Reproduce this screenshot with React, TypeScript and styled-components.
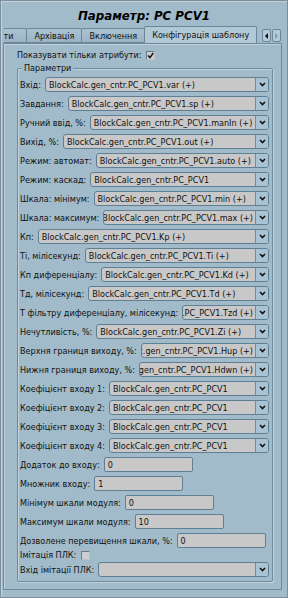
import React from 'react';
import styled, { createGlobalStyle } from 'styled-components';

const GlobalStyle = createGlobalStyle`
  html, body {
    margin: 0;
    padding: 0;
    background: #a1bbca;
  }
  body {
    font-family: "DejaVu Sans", "Liberation Sans", sans-serif;
  }
`;

type Row =
  | { kind: 'combo'; label: string; value: string }
  | { kind: 'edit'; label: string; value: string }
  | { kind: 'check'; label: string; checked: boolean };

const rows: Row[] = [
  { kind: 'combo', label: 'Вхід:', value: 'BlockCalc.gen_cntr.PC_PCV1.var (+)' },
  { kind: 'combo', label: 'Завдання:', value: 'BlockCalc.gen_cntr.PC_PCV1.sp (+)' },
  { kind: 'combo', label: 'Ручний ввід, %:', value: 'BlockCalc.gen_cntr.PC_PCV1.manIn (+)' },
  { kind: 'combo', label: 'Вихід, %:', value: 'BlockCalc.gen_cntr.PC_PCV1.out (+)' },
  { kind: 'combo', label: 'Режим: автомат:', value: 'BlockCalc.gen_cntr.PC_PCV1.auto (+)' },
  { kind: 'combo', label: 'Режим: каскад:', value: 'BlockCalc.gen_cntr.PC_PCV1' },
  { kind: 'combo', label: 'Шкала: мінімум:', value: 'BlockCalc.gen_cntr.PC_PCV1.min (+)' },
  { kind: 'combo', label: 'Шкала: максимум:', value: 'BlockCalc.gen_cntr.PC_PCV1.max (+)' },
  { kind: 'combo', label: 'Кп:', value: 'BlockCalc.gen_cntr.PC_PCV1.Kp (+)' },
  { kind: 'combo', label: 'Ті, мілісекунд:', value: 'BlockCalc.gen_cntr.PC_PCV1.Ti (+)' },
  { kind: 'combo', label: 'Кп диференціалу:', value: 'BlockCalc.gen_cntr.PC_PCV1.Kd (+)' },
  { kind: 'combo', label: 'Тд, мілісекунд:', value: 'BlockCalc.gen_cntr.PC_PCV1.Td (+)' },
  { kind: 'combo', label: 'Т фільтру диференціалу, мілісекунд:', value: 'BlockCalc.gen_cntr.PC_PCV1.Tzd (+)' },
  { kind: 'combo', label: 'Нечутливість, %:', value: 'BlockCalc.gen_cntr.PC_PCV1.Zi (+)' },
  { kind: 'combo', label: 'Верхня границя виходу, %:', value: 'BlockCalc.gen_cntr.PC_PCV1.Hup (+)' },
  { kind: 'combo', label: 'Нижня границя виходу, %:', value: 'BlockCalc.gen_cntr.PC_PCV1.Hdwn (+)' },
  { kind: 'combo', label: 'Коефіцієнт входу 1:', value: 'BlockCalc.gen_cntr.PC_PCV1' },
  { kind: 'combo', label: 'Коефіцієнт входу 2:', value: 'BlockCalc.gen_cntr.PC_PCV1' },
  { kind: 'combo', label: 'Коефіцієнт входу 3:', value: 'BlockCalc.gen_cntr.PC_PCV1' },
  { kind: 'combo', label: 'Коефіцієнт входу 4:', value: 'BlockCalc.gen_cntr.PC_PCV1' },
  { kind: 'edit', label: 'Додаток до входу:', value: '0' },
  { kind: 'edit', label: 'Множник входу:', value: '1' },
  { kind: 'edit', label: 'Мінімум шкали модуля:', value: '0' },
  { kind: 'edit', label: 'Максимум шкали модуля:', value: '10' },
  { kind: 'edit', label: 'Дозволене перевищення шкали, %:', value: '0' },
  { kind: 'check', label: 'Імітація ПЛК:', checked: false },
  { kind: 'combo', label: 'Вхід імітації ПЛК:', value: '' },
];

const tabs = ['Атрибути', 'Архівація', 'Включення', 'Конфігурація шаблону'];

function Chevron() {
  return (
    <svg width="7" height="5" viewBox="0 0 7 5">
      <polyline points="1,1 3.5,3.5 6,1" fill="none" stroke="#111" strokeWidth="1.6" />
    </svg>
  );
}

function CheckMark() {
  return (
    <svg width="7" height="7" viewBox="0 0 7 7">
      <polyline points="1,3.5 3,5.6 6.2,1" fill="none" stroke="#111" strokeWidth="1.5" />
    </svg>
  );
}

function App() {
  return (
    <>
      <GlobalStyle />
      <Window>
        <Title>Параметр: PC PCV1</Title>
        <TabBar>
          <TabViewport>
            <TabStrip>
              {tabs.map((t, i) => (
                <Tab key={t} $active={i === tabs.length - 1}>
                  {t}
                </Tab>
              ))}
            </TabStrip>
          </TabViewport>
          <ScrollButton>
            <Arrow $dir="left" $enabled />
          </ScrollButton>
          <ScrollButton>
            <Arrow $dir="right" $enabled={false} />
          </ScrollButton>
        </TabBar>
        <Panel>
          <TopRow>
            <Label>Показувати тільки атрибути:</Label>
            <CheckBox>
              <CheckMark />
            </CheckBox>
          </TopRow>
          <Group>
            <Legend>Параметри</Legend>
            <Rows>
              {rows.map((r) => {
                if (r.kind === 'check') {
                  return (
                    <CheckRow key={r.label}>
                      <Label>{r.label}</Label>
                      <CheckBox />
                    </CheckRow>
                  );
                }
                if (r.kind === 'edit') {
                  return (
                    <FieldRow key={r.label}>
                      <Label>{r.label}</Label>
                      <LineEdit>{r.value}</LineEdit>
                    </FieldRow>
                  );
                }
                return (
                  <FieldRow key={r.label}>
                    <Label>{r.label}</Label>
                    <Combo>
                      <ComboText>
                        <span>{r.value}</span>
                      </ComboText>
                      <ComboButton>
                        <Chevron />
                      </ComboButton>
                    </Combo>
                  </FieldRow>
                );
              })}
            </Rows>
          </Group>
        </Panel>
      </Window>
    </>
  );
}

const Window = styled.div`
  width: 288px;
  height: 598px;
  box-sizing: border-box;
  border: 1px solid #7a8e9b;
  box-shadow: inset 1px 1px 0 #c3d2dc;
  background: #a1bbca;
  display: flex;
  flex-direction: column;
  overflow: hidden;
  color: #111;
`;

const Title = styled.div`
  height: 26px;
  display: flex;
  align-items: center;
  justify-content: center;
  padding-top: 4px;
  box-sizing: border-box;
  font-size: 11.8px;
  font-weight: bold;
  font-style: italic;
  color: #000;
`;

const TabBar = styled.div`
  display: flex;
  align-items: flex-end;
  height: 16px;
  padding: 0 6px 0 3px;
  position: relative;
  z-index: 1;
`;

const TabViewport = styled.div`
  flex: 1;
  min-width: 0;
  overflow: hidden;
  height: 17px;
  display: flex;
  align-items: flex-end;
`;

const TabStrip = styled.div`
  display: flex;
  align-items: flex-end;
  margin-left: -38px;
`;

const Tab = styled.div<{ $active: boolean }>`
  flex: none;
  height: ${(p) => (p.$active ? 17 : 15)}px;
  box-sizing: border-box;
  padding: 0 7px;
  display: flex;
  align-items: center;
  font-size: 8.1px;
  white-space: nowrap;
  border: 1px solid #6b8699;
  border-bottom: ${(p) => (p.$active ? 'none' : '1px solid #6b8699')};
  border-radius: 2px 2px 0 0;
  margin-left: -1px;
  background: ${(p) =>
    p.$active
      ? '#b1c8d6'
      : 'linear-gradient(#abc2d1, #9bb3c3)'};

  &:first-child {
    padding-right: 13px;
  }
`;

const ScrollButton = styled.div`
  width: 9px;
  height: 13px;
  margin: 0 0 1px 1px;
  box-sizing: border-box;
  border: 1px solid #6b8699;
  border-radius: 2px;
  background: #b5cad7;
  display: flex;
  align-items: center;
  justify-content: center;
`;

const Arrow = styled.div<{ $dir: 'left' | 'right'; $enabled: boolean }>`
  width: 0;
  height: 0;
  border-top: 3px solid transparent;
  border-bottom: 3px solid transparent;
  ${(p) =>
    p.$dir === 'left'
      ? `border-right: 3px solid ${p.$enabled ? '#111' : '#8a9aa5'};`
      : `border-left: 3px solid ${p.$enabled ? '#111' : '#8a9aa5'};`}
`;

const Panel = styled.div`
  flex: 1;
  margin: 0 5px 7px 2px;
  border: 1px solid #6f899b;
  box-shadow: inset 1px 1px 0 #c0d1dc;
  padding: 6px 8px 7px 13px;
  display: flex;
  flex-direction: column;
  min-height: 0;
`;

const Label = styled.span`
  flex: none;
  font-size: 8.1px;
  white-space: nowrap;
  color: #111;
`;

const TopRow = styled.div`
  display: flex;
  align-items: center;
  gap: 5px;
  height: 10px;
`;

const CheckBox = styled.div`
  width: 9px;
  height: 9px;
  box-sizing: border-box;
  border: 1px solid #6c7a84;
  border-right-color: #b8c4cc;
  border-bottom-color: #b8c4cc;
  background: #cbcfd2;
  display: flex;
  align-items: center;
  justify-content: center;
  flex: none;
`;

const Group = styled.fieldset`
  margin: 3px 0 0 0;
  padding: 4px 3px 4px 2px;
  border: 1px solid #718b9d;
  border-radius: 2px;
  box-shadow: inset 1px 1px 0 #c0d1dc, 1px 1px 0 #c0d1dc;
  min-width: 0;
`;

const Legend = styled.legend`
  font-size: 8.1px;
  padding: 0 2px;
  margin-left: 2px;
  background: #a1bbca;
  line-height: 10px;
`;

const Rows = styled.div`
  display: flex;
  flex-direction: column;
  gap: 4px;
`;

const FieldRow = styled.div`
  display: flex;
  align-items: center;
  gap: 4px;
  height: 15px;
`;

const CheckRow = styled.div`
  display: flex;
  align-items: center;
  gap: 5px;
  height: 10px;
  margin: -2px 0;
`;

const Combo = styled.div`
  flex: 1;
  min-width: 0;
  height: 15px;
  box-sizing: border-box;
  border: 1px solid #5f7f95;
  border-radius: 3px;
  background: #c8c8c8;
  display: flex;
  overflow: hidden;
`;

const ComboText = styled.div`
  flex: 1;
  min-width: 0;
  overflow: hidden;
  display: flex;
  justify-content: flex-end;
  align-items: center;
  padding: 0 2px 0 3px;
  font-size: 8.1px;
  white-space: nowrap;
  color: #111;

  & > span {
    flex: 1 0 auto;
  }
`;

const ComboButton = styled.div`
  flex: none;
  width: 12px;
  border-left: 1px solid #6f8ca0;
  background: #a9c3d4;
  display: flex;
  align-items: center;
  justify-content: center;
`;

const LineEdit = styled.div`
  flex: none;
  width: 89px;
  height: 15px;
  box-sizing: border-box;
  border: 1px solid #5f7f95;
  border-radius: 2px;
  background: #c8c8c8;
  padding-left: 3px;
  display: flex;
  align-items: center;
  font-size: 8.1px;
  color: #111;
`;

export default App;
